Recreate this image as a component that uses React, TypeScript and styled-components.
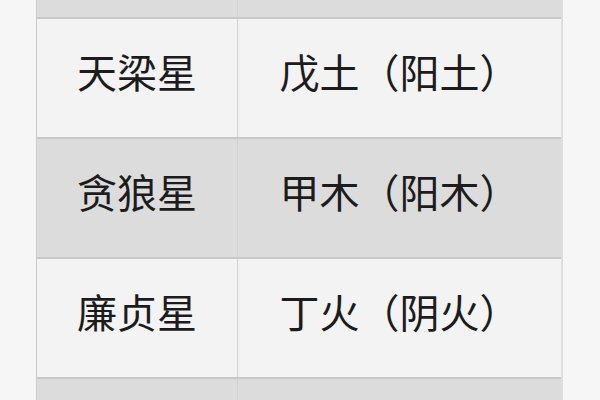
import React from "react";
import styled, { createGlobalStyle } from "styled-components";

const GlobalStyle = createGlobalStyle`
  html, body {
    margin: 0;
    padding: 0;
    background: #f6f6f6;
    overflow: hidden;
  }
  body {
    width: 600px;
    height: 400px;
    font-family: "Noto Sans CJK SC", "Noto Sans", sans-serif;
  }
`;

interface IStar {
  name: string;
  element: string;
}

// first and last rows are cut off by the screen edges, their text is not shown
const stars: IStar[] = [
  { name: "", element: "" },
  { name: "天梁星", element: "戊土（阳土）" },
  { name: "贪狼星", element: "甲木（阳木）" },
  { name: "廉贞星", element: "丁火（阴火）" },
  { name: "", element: "" },
];

export default function App() {
  return (
    <>
      <GlobalStyle />
      <Page>
        <Table>
          {stars.map((star: IStar, key: number) => {
            return (
              <Row key={key} $shaded={key % 2 === 0}>
                <NameCell>{star.name}</NameCell>
                <ElementCell>{star.element}</ElementCell>
              </Row>
            );
          })}
        </Table>
      </Page>
    </>
  );
}

const Page = styled.main`
  width: 600px;
  height: 400px;
  overflow: hidden;
  padding-left: 36px;
  box-sizing: border-box;
`;

const Table = styled.section`
  width: 527px;
  margin-top: -101px;
  display: flex;
  flex-direction: column;
  border-left: 1px solid #cbcbcb;
  border-right: 2px solid #dedede;
  box-sizing: border-box;
`;

const Row = styled.div<{ $shaded: boolean }>`
  display: grid;
  grid-template-columns: 201px 1fr;
  height: 120px;
  box-sizing: border-box;
  border-bottom: 2px solid #c9c9c9;
  background: ${(p) => (p.$shaded ? "#dcdcdc" : "#f3f3f3")};
`;

const Cell = styled.div`
  display: flex;
  align-items: center;
  justify-content: center;
  padding-bottom: 14px;
  font-size: 40px;
  color: #1c1c1c;
  white-space: nowrap;
`;

const NameCell = styled(Cell)`
  border-right: 1px solid #d2d2d2;
`;

const ElementCell = styled(Cell)``;
